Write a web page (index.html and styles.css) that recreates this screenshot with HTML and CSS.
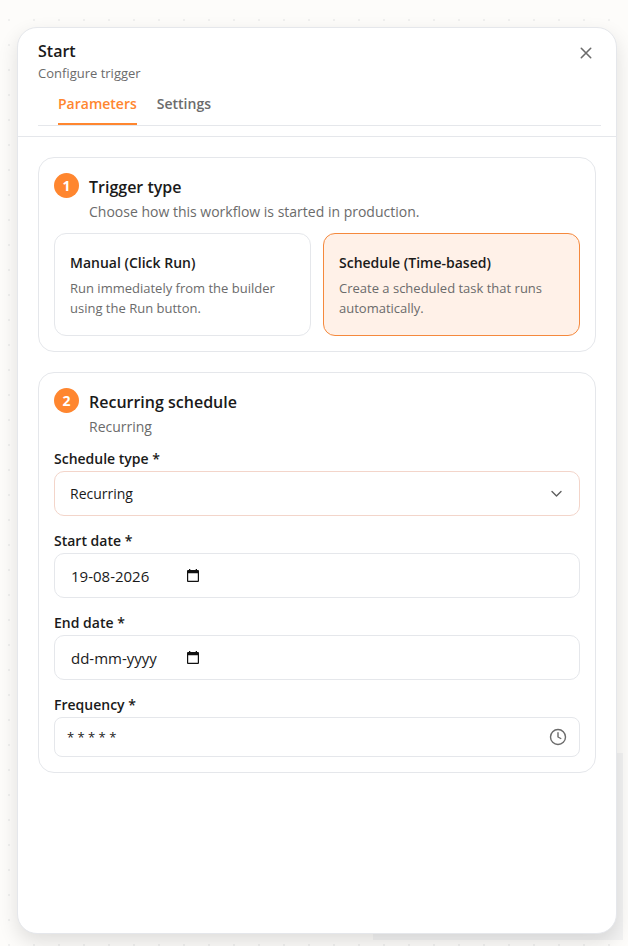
FILE: index.html
```html
<!DOCTYPE html>
<html lang="en">
<head>
<meta charset="utf-8">
<meta name="viewport" content="width=device-width, initial-scale=1">
<title>Start</title>
<link rel="stylesheet" href="styles.css">
</head>
<body>
<div class="minimap"></div>
<main class="panel">
  <header class="panel-header">
    <div class="heading">
      <div>
        <h1 class="title">Start</h1>
        <p class="subtitle">Configure trigger</p>
      </div>
      <button class="close" type="button" aria-label="Close">
        <svg width="16" height="16" viewBox="0 0 16 16" fill="none" stroke="currentColor" stroke-width="1.6" stroke-linecap="round"><path d="M3.300 3.300l9.400 9.400M12.700 3.300l-9.400 9.400"/></svg>
      </button>
    </div>
    <nav class="tabs">
      <a class="tab active" href="#parameters">Parameters</a>
      <a class="tab" href="#settings">Settings</a>
    </nav>
  </header>

  <div class="content" id="parameters">
    <section class="section">
      <div class="section-head">
        <span class="step">1</span>
        <div>
          <h2 class="section-title">Trigger type</h2>
          <p class="section-text">Choose how this workflow is started in production.</p>
        </div>
      </div>
      <div class="options">
        <button class="option" type="button" aria-pressed="false">
          <span class="option-title">Manual (Click Run)</span>
          <span class="option-text">Run immediately from the builder using the Run button.</span>
        </button>
        <button class="option selected" type="button" aria-pressed="true">
          <span class="option-title">Schedule (Time-based)</span>
          <span class="option-text">Create a scheduled task that runs automatically.</span>
        </button>
      </div>
    </section>

    <section class="section">
      <div class="section-head">
        <span class="step">2</span>
        <div>
          <h2 class="section-title">Recurring schedule</h2>
          <p class="section-text">Recurring</p>
        </div>
      </div>
      <form class="fields">
        <div class="field">
          <label for="type">Schedule type *</label>
          <div class="control accent">
            <select id="type"><option>Recurring</option></select>
            <svg class="chevron" width="16" height="16" viewBox="0 0 16 16" fill="none" stroke="currentColor" stroke-width="1.4" stroke-linecap="round" stroke-linejoin="round"><path d="M4 5.500l4.500 4.500L13 5.500"/></svg>
          </div>
        </div>
        <div class="field">
          <label for="start">Start date *</label>
          <div class="control date">
            <input id="start" type="text" value="19-08-2026">
            <button class="picker" type="button" aria-label="Choose start date">
              <svg width="14" height="14" viewBox="0 0 14 14"><path fill="currentColor" fill-rule="evenodd" d="M3 0h1.300v1H9.700V0H11v1h1q1 0 1 1v10q0 1-1 1H2q-1 0-1-1V2q0-1 1-1h1zM2.200 4.200v7.600h9.600V4.200z"/></svg>
            </button>
          </div>
        </div>
        <div class="field">
          <label for="end">End date *</label>
          <div class="control date">
            <input id="end" type="text" placeholder="dd-mm-yyyy">
            <button class="picker" type="button" aria-label="Choose end date">
              <svg width="14" height="14" viewBox="0 0 14 14"><path fill="currentColor" fill-rule="evenodd" d="M3 0h1.300v1H9.700V0H11v1h1q1 0 1 1v10q0 1-1 1H2q-1 0-1-1V2q0-1 1-1h1zM2.200 4.200v7.600h9.600V4.200z"/></svg>
            </button>
          </div>
        </div>
        <div class="field">
          <label for="frequency">Frequency *</label>
          <div class="control compact">
            <input id="frequency" type="text" value="* * * * *">
            <button class="picker clock" type="button" aria-label="Edit frequency">
              <svg width="18" height="18" viewBox="0 0 18 18" fill="none" stroke="currentColor" stroke-width="1.400" stroke-linecap="round" stroke-linejoin="round"><circle cx="9" cy="9" r="7.500"/><path d="M9 4.800V9l2.800 1.500"/></svg>
            </button>
          </div>
        </div>
      </form>
    </section>
  </div>
</main>
</body>
</html>
```

FILE: styles.css
```css
* {
  box-sizing: border-box;
}

body {
  display: flex;
  min-height: 100vh;
  margin: 0;
  padding: 27px 11px 12px 17px;
  background: #fdfcfa radial-gradient(circle at 9px 20px, #f0f0ef 1px, transparent 1px) 0 0 / 25px 25px;
  color: #1a1a1a;
  font-family: "Segoe UI", "Open Sans", sans-serif;
  font-size: 14px;
  line-height: 20px;
}

h1, h2, p {
  margin: 0;
}

button, input, select {
  margin: 0;
  padding: 0;
  border: 0;
  background: none;
  color: inherit;
  font: inherit;
}

.minimap {
  position: absolute;
  right: 5px;
  bottom: 6px;
  width: 250px;
  height: 187px;
  background: #f3f3f3;
}

.panel {
  position: relative;
  flex: 1;
  min-width: 0;
  border: 1px solid #e5e7eb;
  border-radius: 20px;
  background: #fff;
  box-shadow: 0 8px 20px rgba(0, 0, 0, 0.12);
}

.panel-header {
  padding: 12px 15px 10px 20px;
  border-bottom: 1px solid #e5e7eb;
}

.heading {
  display: flex;
  justify-content: space-between;
  padding-right: 7px;
}

.title {
  font-size: 16px;
  font-weight: 600;
  line-height: 22px;
}

.subtitle {
  color: #6b6b6b;
  font-size: 13px;
  line-height: 22px;
}

.close {
  align-self: flex-start;
  width: 16px;
  height: 16px;
  margin-top: 5px;
  color: #6b6b6b;
}

.close svg {
  display: block;
}

.tabs {
  display: flex;
  gap: 20px;
  padding: 0 20px;
  border-bottom: 1px solid #e5e7eb;
}

.tab {
  padding: 10px 0 9px;
  border-bottom: 2px solid transparent;
  color: #6b6b6b;
  font-weight: 600;
  text-decoration: none;
}

.tab.active {
  border-color: #ff862f;
  color: #ff862f;
}

.content {
  display: grid;
  gap: 20px;
  padding: 20px;
}

.section {
  padding: 15px;
  border: 1px solid #e5e7eb;
  border-radius: 16px;
}

.section-head {
  display: flex;
  gap: 10px;
}

.step {
  flex: none;
  width: 25px;
  height: 25px;
  border-radius: 50%;
  background: #ff862f;
  color: #fff;
  font-weight: 700;
  line-height: 26px;
  text-align: center;
}

.section-title {
  font-size: 16px;
  font-weight: 600;
  line-height: 28px;
}

.section-text {
  color: #6b6b6b;
  line-height: 22px;
}

.options {
  display: grid;
  grid-template-columns: 1fr 1fr;
  gap: 12px;
  margin-top: 10px;
}

.option {
  padding: 15px;
  border: 1px solid #e5e7eb;
  border-radius: 12px;
  text-align: left;
}

.option.selected {
  border-color: #f5893d;
  background: #fff1e8;
}

.option-title {
  display: block;
  padding: 4px 0 5px;
  font-weight: 600;
}

.option-text {
  display: block;
  padding-bottom: 2px;
  color: #6b6b6b;
  font-size: 13px;
}

.fields {
  display: grid;
  gap: 15px;
  margin-top: 11px;
}

.field label {
  display: block;
  padding-bottom: 2px;
  font-weight: 600;
}

.control {
  display: flex;
  align-items: center;
  height: 45px;
  padding: 0 15px;
  border: 1px solid #e5e7eb;
  border-radius: 10px;
}

.control.accent {
  border-color: #f3d5ca;
}

.control input,
.control select {
  flex: 1;
  min-width: 0;
  height: 100%;
  outline: 0;
  appearance: none;
}

.control input::placeholder {
  color: inherit;
  opacity: 1;
}

.chevron {
  color: #5f5f5f;
  pointer-events: none;
}

.control.date {
  padding-left: 16px;
}

.control.date input {
  flex: 0 0 115px;
  font-size: 15px;
}

.picker {
  display: flex;
  color: #111;
}

.picker.clock {
  color: #6b6b6b;
}

.control.compact {
  height: 40px;
  padding: 0 12px;
  border-radius: 8px;
}

.control.compact input {
  font-size: 13px;
}
```
